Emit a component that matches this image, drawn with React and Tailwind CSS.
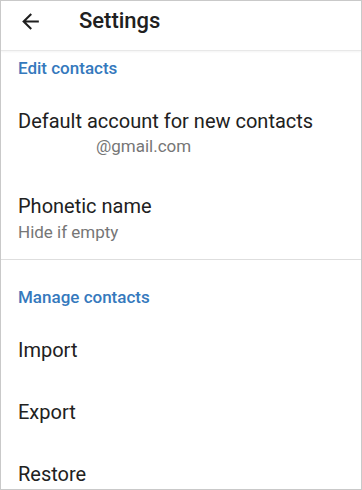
export default function App() {
  const font = { fontFamily: 'Roboto, "Noto Sans", "Liberation Sans", sans-serif' };

  return (
    <div
      className="w-[362px] h-[490px] bg-white border border-[#c9c9c9] overflow-hidden text-[#212121]"
      style={font}
    >
      {/* Top bar */}
      <div className="h-[50px] pb-[9px] flex items-center border-b border-[#e8e8e8] shadow-[0_1px_2px_rgba(0,0,0,0.05)]">
        <svg
          className="ml-[17px] w-[25px] h-[25px]"
          viewBox="0 0 24 24"
          fill="#1f1f1f"
        >
          <path d="M20 11H7.83l5.59-5.59L12 4l-8 8 8 8 1.41-1.41L7.83 13H20v-2z" />
        </svg>
        <h1 className="ml-[36px] text-[22px] font-medium leading-6 text-[#202020]">Settings</h1>
      </div>

      {/* Edit contacts */}
      <div className="px-[17px]">
        <p className="mt-[7px] text-[17px] leading-5 font-medium text-[#3579bd]">Edit contacts</p>

        <div className="mt-[31px]">
          <p className="text-[20px] leading-6">Default account for new contacts</p>
          <p className="mt-[3px] pl-[78px] text-[17px] leading-5 text-[#767676]">@gmail.com</p>
        </div>

        <div className="mt-[38px]">
          <p className="text-[20px] leading-6">Phonetic name</p>
          <p className="mt-[4px] text-[17px] leading-5 text-[#767676]">Hide if empty</p>
        </div>
      </div>

      <div className="mt-[17px] border-t border-[#dedede]" />

      {/* Manage contacts */}
      <div className="px-[17px]">
        <p className="mt-[27px] text-[17px] leading-5 font-medium text-[#3579bd]">Manage contacts</p>
        <p className="mt-[31px] text-[20px] leading-6">Import</p>
        <p className="mt-[38px] text-[20px] leading-6">Export</p>
        <p className="mt-[38px] text-[20px] leading-6">Restore</p>
      </div>
    </div>
  );
}
